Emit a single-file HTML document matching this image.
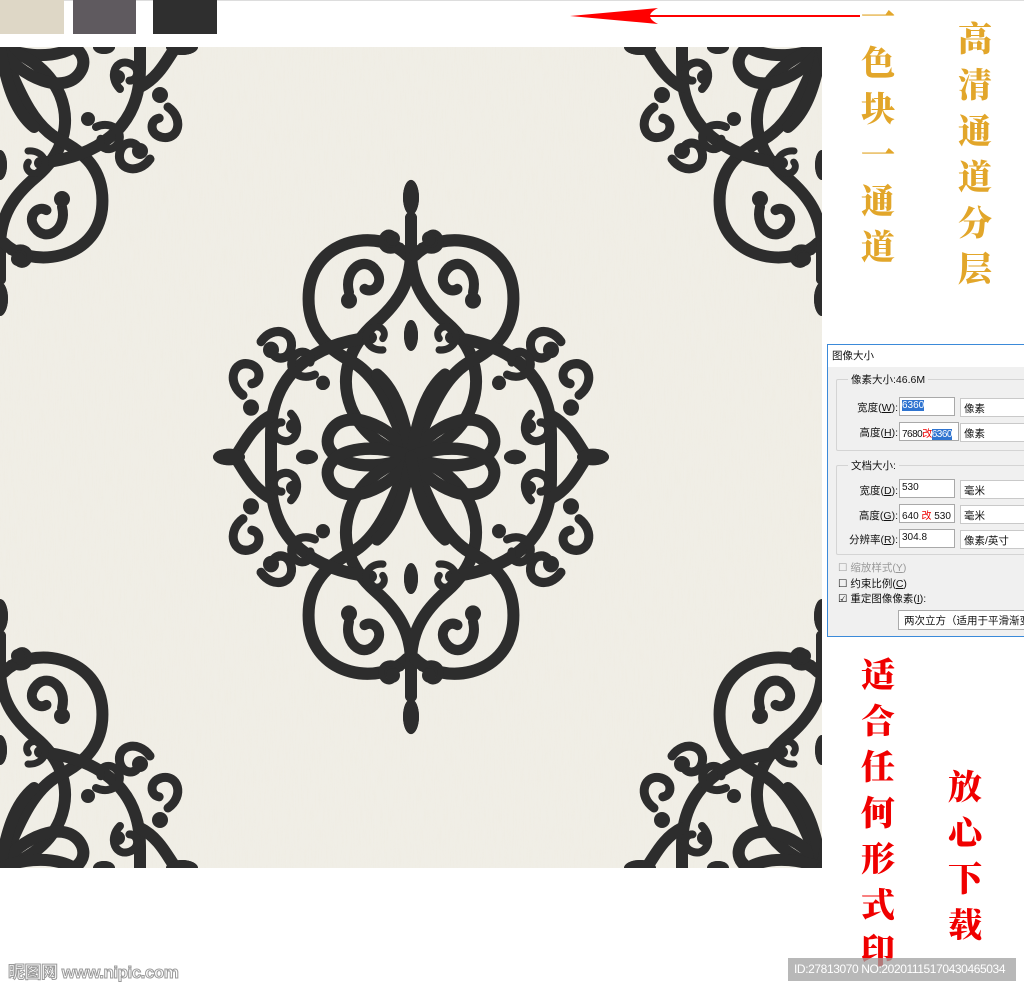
<!DOCTYPE html>
<html style="width:1024px;height:989px;overflow:hidden"><head><meta charset="utf-8"><style>
*{margin:0;padding:0;box-sizing:border-box}
body{width:1024px;height:989px;background:#fff;position:relative;overflow:hidden;font-family:"Liberation Sans","Noto Sans CJK SC",sans-serif}
.a{position:absolute}
.col{position:absolute;width:50px;text-align:center;font-family:"Noto Serif CJK SC","WenQuanYi Zen Hei",serif;font-weight:900;font-size:34px;line-height:46px;overflow:hidden}
.gold{color:#e2a62a}
.red{color:#f00000}
.dlg{position:absolute;left:827px;top:344px;width:200px;height:293px;background:#f0f0f0;border:1px solid #3b8ad9;font-size:10.5px;color:#111;overflow:hidden}
.dlg .t{position:absolute;left:0;top:0;width:100%;height:22px;background:#fff;padding:3px 4px}
.box{position:absolute;border:1px solid #d4d4d4;border-radius:2px}
.lab{position:absolute;background:#f0f0f0;padding:0 3px}
.in{position:absolute;background:#fff;border:1px solid #a9a9a9;height:19px;padding:2px 2px;white-space:nowrap;overflow:hidden;font-size:10px}
.sel{position:absolute;background:#fff;border:1px solid #c9c9c9;height:19px;padding:2px 3px}
.sel:after{content:"⌄";position:absolute;right:3px;top:-1px;color:#555}
.hl{background:#2f74d0;color:#fff}
.r{position:absolute;text-align:right;width:70px}
u{text-decoration:underline}
</style></head><body>
<div class="a" style="left:0;top:0;width:1024px;height:1px;background:#ddd"></div>
<div class="a" style="left:0;top:0;width:64px;height:34px;background:#ded7c6"></div>
<div class="a" style="left:73px;top:0;width:63px;height:34px;background:#5f5a5f"></div>
<div class="a" style="left:153px;top:0;width:64px;height:34px;background:#2f2f2f"></div>
<svg class="a" style="left:560px;top:4px" width="310" height="22">
<line x1="70" y1="12" x2="300" y2="12" stroke="#f00" stroke-width="2"/>
<path d="M10,12 L98,4 Q82,12 98,20 Z" fill="#f00"/>
</svg>

<svg class="a" style="left:0;top:47px" width="822" height="821" viewBox="0 0 822 821">
<defs>
<filter id="tx" x="0" y="0" width="100%" height="100%"><feTurbulence type="fractalNoise" baseFrequency="0.9 0.05" numOctaves="2" seed="3"/><feColorMatrix values="0 0 0 0 0.82  0 0 0 0 0.79  0 0 0 0 0.68  0 0 0 0.5 0"/></filter>
<path id="curl" d="M0,0 C6,-22 32,-24 34,-4 C35,10 20,14 15,5" fill="none"/>
<g id="q" fill="none" stroke="#2d2d2d" stroke-width="12" stroke-linecap="round">
<path d="M0,-232 L0,-200 C0,-170 -12,-150 -36,-130 C-62,-108 -72,-78 -60,-48 C-48,-20 -22,-6 0,0"/>
<path d="M-4,-196 C-30,-222 -96,-214 -102,-162 C-106,-122 -82,-104 -58,-92 C-30,-76 -18,-40 0,0"/>
<path d="M-40,-116 C-96,-110 -140,-82 -140,-22 L-140,0"/>
<path d="M0,0 C-18,-30 -68,-52 -82,-22 C-92,4 -44,18 0,0"/>
<path d="M0,0 C-6,-34 -14,-64 -34,-80"/>
<path d="M-140,-40 C-160,-30 -168,-10 -176,0"/>
<g stroke-width="10">
<use href="#curl" transform="translate(-62,-160) rotate(-30)"/>
<use href="#curl" transform="translate(-150,-112) rotate(20) scale(0.9)"/>
<use href="#curl" transform="translate(-168,-60) rotate(-70) scale(0.9)"/>
<use href="#curl" transform="translate(-120,-42) rotate(120) scale(0.8)"/>
<use href="#curl" transform="translate(-96,-80) rotate(-130) scale(0.8)"/>
<use href="#curl" transform="translate(-10,-205) rotate(-150) scale(0.6)"/>
<use href="#curl" transform="translate(-28,-104) rotate(-110) scale(0.7)"/>
</g>
<g fill="#2d2d2d" stroke="none">
<circle cx="-62" cy="-152" r="8"/><circle cx="-140" cy="-104" r="8"/><circle cx="-160" cy="-48" r="8"/>
<circle cx="-118" cy="-30" r="7"/><circle cx="-88" cy="-72" r="7"/><circle cx="-18" cy="-212" r="7"/>
<ellipse cx="0" cy="-252" rx="8" ry="17"/><ellipse cx="-182" cy="0" rx="16" ry="8"/>
<ellipse cx="-104" cy="0" rx="11" ry="7"/><ellipse cx="0" cy="-118" rx="7" ry="15"/>
</g>
</g>
<g id="m"><use href="#q"/><use href="#q" transform="scale(-1,1)"/><use href="#q" transform="scale(1,-1)"/><use href="#q" transform="scale(-1,-1)"/></g>
</defs>
<rect width="822" height="821" fill="#f1efe8"/>
<rect width="822" height="821" filter="url(#tx)" opacity="0.6"/>
<use href="#m" transform="translate(411,410) scale(1,1.03)"/>
<use href="#m" transform="translate(0,0)"/>
<use href="#m" transform="translate(822,0)"/>
<use href="#m" transform="translate(0,821)"/>
<use href="#m" transform="translate(822,821)"/>
</svg>

<div class="col gold" style="left:853px;top:-8px;height:280px">一<br>色<br>块<br>一<br>通<br>道</div>
<div class="col gold" style="left:950px;top:14px;height:280px">高<br>清<br>通<br>道<br>分<br>层</div>
<div class="col red" style="left:853px;top:650px;height:330px">适<br>合<br>任<br>何<br>形<br>式<br>印</div>
<div class="col red" style="left:940px;top:762px;height:190px">放<br>心<br>下<br>载</div>

<div class="dlg">
<div class="t">图像大小</div>
<div class="box" style="left:8px;top:34px;width:200px;height:72px"></div>
<div class="lab" style="left:20px;top:27px">像素大小:46.6M</div>
<div class="r" style="left:0;top:55px">宽度(<u>W</u>):</div>
<div class="in" style="left:71px;top:52px;width:56px"><span class="hl">6360</span></div>
<div class="sel" style="left:132px;top:53px;width:80px">像素</div>
<div class="r" style="left:0;top:80px">高度(<u>H</u>):</div>
<div class="in" style="left:71px;top:77px;width:60px;letter-spacing:-0.5px">7680<span style="color:#e00">改</span><span class="hl">6360</span></div>
<div class="sel" style="left:132px;top:78px;width:80px">像素</div>
<div class="box" style="left:8px;top:120px;width:200px;height:90px"></div>
<div class="lab" style="left:20px;top:113px">文档大小:</div>
<div class="r" style="left:0;top:138px">宽度(<u>D</u>):</div>
<div class="in" style="left:71px;top:134px;width:56px">530</div>
<div class="sel" style="left:132px;top:135px;width:80px">毫米</div>
<div class="r" style="left:0;top:163px">高度(<u>G</u>):</div>
<div class="in" style="left:71px;top:159px;width:56px">640 <span style="color:#e00">改</span> 530</div>
<div class="sel" style="left:132px;top:160px;width:80px">毫米</div>
<div class="r" style="left:0;top:187px">分辨率(<u>R</u>):</div>
<div class="in" style="left:71px;top:184px;width:56px">304.8</div>
<div class="sel" style="left:132px;top:185px;width:80px">像素/英寸</div>
<div class="a" style="left:10px;top:215px;color:#999">☐ 缩放样式(<u>Y</u>)</div>
<div class="a" style="left:10px;top:231px">☐ 约束比例(<u>C</u>)</div>
<div class="a" style="left:10px;top:246px">☑ 重定图像像素(<u>I</u>):</div>
<div class="a" style="left:70px;top:265px;width:140px;height:20px;border:1px solid #aaa;background:#fff;padding:2px 5px;white-space:nowrap;overflow:hidden">两次立方（适用于平滑渐变</div>
</div>

<div class="a" style="left:8px;top:958px;font-size:17px;font-weight:bold;color:#fff;-webkit-text-stroke:1px #999;letter-spacing:-0.5px">昵图网 www.nipic.com</div>
<div class="a" style="left:788px;top:958px;width:228px;height:23px;background:rgba(160,160,160,0.75);color:#fff;font-size:12px;line-height:23px;padding-left:6px;letter-spacing:-0.4px;white-space:nowrap;overflow:hidden">ID:27813070 NO:20201115170430465034</div>
</body></html>
